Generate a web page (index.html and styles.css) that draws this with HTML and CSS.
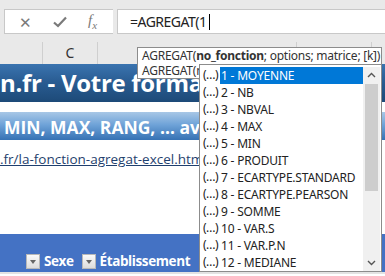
FILE: index.html
```html
<!DOCTYPE html>
<html lang="fr">
<head>
  <meta charset="UTF-8" />
  <title>AGREGAT</title>
  <link rel="stylesheet" href="styles.css">
</head>
<body>
  <div class="formula-bar">
    <div class="fx-buttons">
      <span class="btn-x">✕</span>
      <span class="btn-ok">
        <svg width="14" height="12" viewBox="0 0 14 12"><path d="M1 6.5 L5 10 L13 1.5" fill="none" stroke="#7a7a7a" stroke-width="2.2"/></svg>
      </span>
      <span class="btn-fx"><i>f</i><sub>x</sub></span>
    </div>
    <div class="formula-input">=AGREGAT(1<span class="caret"></span></div>
  </div>

  <div class="col-headers">
    <div class="col w-ab"></div>
    <div class="col w-c">C</div>
    <div class="col w-d"></div>
    <div class="col w-e"></div>
    <div class="col w-f"></div>
  </div>

  <div class="sheet">
    <div class="title">n.fr - Votre formation Excel</div>
    <div class="gap"></div>
    <div class="subtitle">MIN, MAX, RANG, … avec AGREGAT</div>
    <div class="link-row"><a href="#">.fr/la-fonction-agregat-excel.html</a></div>
    <div class="empty"></div>
    <div class="table-head">
      <span class="filter"></span><span class="head-label">Sexe</span>
      <span class="filter"></span><span class="head-label">Établissement</span>
    </div>
  </div>

  <div class="tooltip">
    <div>AGREGAT(<b>no_fonction</b>; options; matrice; [k])</div>
    <div>AGREGAT(no_fonction; options; réf1; ...)</div>
  </div>

  <div class="list">
    <ul class="items">
      <li class="selected"><span class="ico">(…)</span><span class="lbl">1 - MOYENNE</span></li>
      <li><span class="ico">(…)</span><span class="lbl">2 - NB</span></li>
      <li><span class="ico">(…)</span><span class="lbl">3 - NBVAL</span></li>
      <li><span class="ico">(…)</span><span class="lbl">4 - MAX</span></li>
      <li><span class="ico">(…)</span><span class="lbl">5 - MIN</span></li>
      <li><span class="ico">(…)</span><span class="lbl">6 - PRODUIT</span></li>
      <li><span class="ico">(…)</span><span class="lbl">7 - ECARTYPE.STANDARD</span></li>
      <li><span class="ico">(…)</span><span class="lbl">8 - ECARTYPE.PEARSON</span></li>
      <li><span class="ico">(…)</span><span class="lbl">9 - SOMME</span></li>
      <li><span class="ico">(…)</span><span class="lbl">10 - VAR.S</span></li>
      <li><span class="ico">(…)</span><span class="lbl">11 - VAR.P.N</span></li>
      <li><span class="ico">(…)</span><span class="lbl">12 - MEDIANE</span></li>
    </ul>
    <div class="scrollbar">
      <svg class="arrow" width="17" height="16" viewBox="0 0 17 16"><path d="M5 10 L8.5 6.5 L12 10" fill="none" stroke="#555" stroke-width="1.4"/></svg>
      <div class="track"><div class="thumb"></div></div>
      <svg class="arrow" width="17" height="16" viewBox="0 0 17 16"><path d="M5 6 L8.5 9.5 L12 6" fill="none" stroke="#555" stroke-width="1.4"/></svg>
    </div>
  </div>
</body>
</html>
```

FILE: styles.css
```css
body {
  margin: 0;
  width: 385px;
  height: 276px;
  overflow: hidden;
  position: relative;
  background: #fff;
  font-family: "Noto Sans", "Open Sans", sans-serif;
}

.formula-bar {
  height: 37px;
  box-sizing: border-box;
  padding: 9px 0 3px 4px;
  background: #e9e9e9;
  display: flex;
  gap: 4px;
}

.fx-buttons {
  width: 109px;
  background: #fff;
  border: 1px solid #c8c8c8;
  border-right: none;
  box-sizing: border-box;
  display: flex;
  align-items: center;
  color: #7a7a7a;
}

.btn-x {
  width: 20px;
  margin-left: 10px;
  font-size: 15px;
  text-align: center;
}

.btn-ok {
  margin-left: 18px;
  display: flex;
}

.btn-fx {
  margin-left: 21px;
  font-family: "Liberation Serif", serif;
  font-size: 15px;
}

.btn-fx sub {
  font-size: 11px;
  font-style: italic;
}

.formula-input {
  flex: 1;
  background: #fff;
  border: 1px solid #c8c8c8;
  border-right: none;
  box-sizing: border-box;
  padding-left: 12px;
  font-size: 14px;
  letter-spacing: -0.5px;
  line-height: 23px;
  color: #222;
  display: flex;
  align-items: center;
}

.caret {
  width: 1px;
  height: 16px;
  background: #000;
  margin-left: 2px;
}

.col-headers {
  height: 27px;
  background: #e9e9e9;
  display: flex;
}

.col {
  box-sizing: border-box;
  border-right: 1px solid #cfcfcf;
  margin-top: 5px;
  text-align: center;
  font-size: 14px;
  line-height: 22px;
  color: #333;
}

.w-ab { width: 43px; }
.w-c { width: 55px; }
.w-d { width: 199px; }
.w-e { width: 75px; }
.w-f { flex: 1; border-right: none; }

.sheet {
  font-family: "Open Sans", "Noto Sans", sans-serif;
  white-space: nowrap;
  overflow: hidden;
}

.title {
  height: 38px;
  background: linear-gradient(#3a74b0, #2a5d93 45%, #1d4a78);
  color: #fff;
  font-weight: bold;
  font-size: 24px;
  line-height: 38px;
  letter-spacing: -0.3px;
}

.gap {
  height: 10px;
}

.subtitle {
  height: 28px;
  background: linear-gradient(#a8c7e6, #6fa3d8 45%, #3672b4);
  color: #fff;
  font-weight: bold;
  font-size: 17.5px;
  line-height: 30px;
  padding-left: 4px;
}

.link-row {
  height: 30px;
  line-height: 38px;
  font-size: 13.5px;
}

.link-row a {
  color: #1f3f6e;
}

.empty {
  height: 64px;
}

.table-head {
  height: 40px;
  background: #4472c4;
  border-bottom: 2px solid #e3e3e3;
  display: flex;
  align-items: flex-end;
  padding: 0 0 3px 26px;
  box-sizing: border-box;
  color: #fff;
  font-weight: bold;
  font-size: 13.5px;
  letter-spacing: -0.4px;
}

.filter {
  width: 14px;
  height: 15px;
  background: linear-gradient(#fafafa, #dcdcdc);
  border: 1px solid #b8b8b8;
  box-sizing: border-box;
  position: relative;
  margin-right: 4px;
}

.filter::after {
  content: "";
  position: absolute;
  left: 3px;
  top: 5px;
  border-left: 3.5px solid transparent;
  border-right: 3.5px solid transparent;
  border-top: 4px solid #666;
}

.head-label {
  line-height: 16px;
  margin-right: 8px;
}

.tooltip {
  position: absolute;
  left: 137px;
  top: 47px;
  width: 245px;
  box-sizing: border-box;
  background: #fff;
  border: 1px solid #8c8c8c;
  padding: 0 4px;
  font-size: 12px;
  letter-spacing: -0.25px;
  line-height: 15px;
  color: #333;
  white-space: nowrap;
  overflow: hidden;
}

.list {
  position: absolute;
  left: 199px;
  top: 64px;
  width: 183px;
  height: 208px;
  box-sizing: border-box;
  background: #fff;
  border: 1px solid #8c8c8c;
  display: flex;
  padding: 2px 1px 0 1px;
}

.items {
  list-style: none;
  margin: 0;
  padding: 0;
  flex: 1;
  white-space: nowrap;
  overflow: hidden;
}

.items li {
  height: 17px;
  display: flex;
  align-items: center;
  font-size: 12px;
  letter-spacing: -0.2px;
  color: #222;
}

.ico {
  width: 19px;
  padding-left: 2px;
  box-sizing: border-box;
  overflow: hidden;
  font-size: 12px;
  letter-spacing: -0.6px;
  line-height: 16px;
  align-self: flex-start;
  color: #1a1a1a;
}

.lbl {
  flex: 1;
  height: 17px;
  line-height: 17px;
  padding-left: 1px;
}

.selected .lbl {
  background: #0078d7;
  color: #fff;
}

.scrollbar {
  width: 17px;
  background: #f0f0f0;
  display: flex;
  flex-direction: column;
}

.arrow {
  display: block;
  flex: none;
}

.track {
  flex: 1;
  padding: 1px 2px;
}

.thumb {
  height: 107px;
  background: #cdcdcd;
}
```
